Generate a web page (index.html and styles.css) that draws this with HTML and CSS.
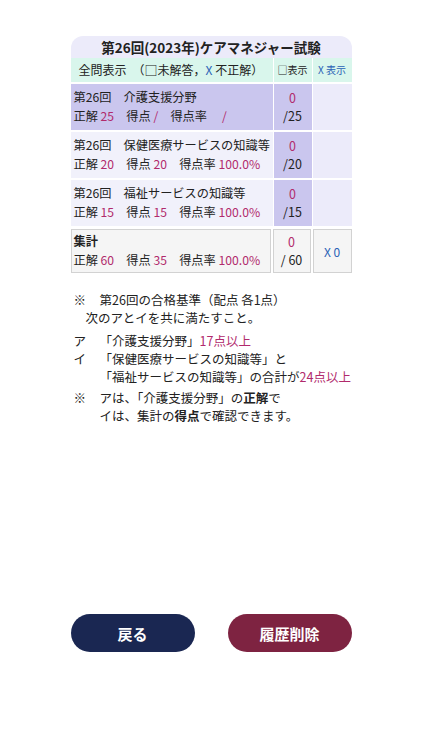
FILE: index.html
```html
<!DOCTYPE html>
<html lang="ja">
  <head>
    <meta charset="UTF-8" />
    <meta name="viewport" content="width=device-width, initial-scale=1.0" />
    <title>第26回(2023年)ケアマネジャー試験</title>
    <link rel="stylesheet" href="styles.css">
  </head>

  <body>
    <div class="page">
      <div class="board">
        <div class="title">第26回(2023年)ケアマネジャー試験</div>
        <div class="row head">
          <div class="cell">全問表示　（<span class="box">□</span>未解答，<span class="blue">X</span> 不正解）</div>
          <div class="cell mid small">□表示</div>
          <div class="cell mid small"><span class="blue">X 表示</span></div>
        </div>

        <div class="row item active">
          <div class="cell info">
            <div>第26回　介護支援分野</div>
            <div>正解 <span class="pink">25</span>　得点 <span class="pink">/</span>　得点率　 <span class="pink">/</span></div>
          </div>
          <div class="cell mid count"><span class="pink">0</span><span>/25</span></div>
          <div class="cell wrong"></div>
        </div>

        <div class="row item">
          <div class="cell info">
            <div>第26回　保健医療サービスの知識等</div>
            <div>正解 <span class="pink">20</span>　得点 <span class="pink">20</span>　得点率 <span class="pink">100.0%</span></div>
          </div>
          <div class="cell mid count"><span class="pink">0</span><span>/20</span></div>
          <div class="cell wrong"></div>
        </div>

        <div class="row item">
          <div class="cell info">
            <div>第26回　福祉サービスの知識等</div>
            <div>正解 <span class="pink">15</span>　得点 <span class="pink">15</span>　得点率 <span class="pink">100.0%</span></div>
          </div>
          <div class="cell mid count"><span class="pink">0</span><span>/15</span></div>
          <div class="cell wrong"></div>
        </div>

        <div class="row total">
          <div class="cell info">
            <div class="bold">集計</div>
            <div>正解 <span class="pink">60</span>　得点 <span class="pink">35</span>　得点率 <span class="pink">100.0%</span></div>
          </div>
          <div class="cell mid count"><span class="pink">0</span><span>/ 60</span></div>
          <div class="cell mid"><span class="blue">X 0</span></div>
        </div>
      </div>

      <div class="notes">
        <div class="note first">
          <span class="mark">※</span>
          <div>第26回の合格基準（配点 各1点）<br><span class="back">次のアとイを共に満たすこと。</span></div>
        </div>
        <div class="note">
          <span class="mark">ア</span>
          <div>「介護支援分野」<span class="pink">17点以上</span></div>
        </div>
        <div class="note third">
          <span class="mark">イ</span>
          <div>「保健医療サービスの知識等」と<br>「福祉サービスの知識等」の合計が<span class="pink">24点以上</span></div>
        </div>
        <div class="note">
          <span class="mark">※</span>
          <div>アは、「介護支援分野」の<b>正解</b>で<br>イは、集計の<b>得点</b>で確認できます。</div>
        </div>
      </div>

      <div class="buttons">
        <button class="btn back-btn">戻る</button>
        <button class="btn clear-btn">履歴削除</button>
      </div>
    </div>
  </body>
</html>
```

FILE: styles.css
```css
body {
  margin: 0;
  background-color: #ffffff;
  font-family: "Noto Sans CJK JP", "Noto Sans", sans-serif;
  color: #222222;
}

.page {
  width: 281px;
  margin: 0 auto;
  padding-top: 36px;
}

.title {
  height: 22px;
  line-height: 22px;
  background-color: #ecebfa;
  border-radius: 12px 12px 0 0;
  text-align: center;
  font-size: 13.5px;
  font-weight: bold;
}

.row {
  display: grid;
  grid-template-columns: 1fr 38px 39px;
  gap: 1px;
}

.cell {
  font-size: 12px;
  white-space: nowrap;
}

.mid {
  display: flex;
  flex-direction: column;
  justify-content: center;
  align-items: center;
}

.head {
  height: 24px;
  background-color: #ffffff;
}
.head .cell {
  background-color: #d9f6ec;
  line-height: 24px;
  font-size: 12px;
}
.head .cell:first-child {
  padding-left: 8px;
}
.head .small {
  font-size: 10px;
}
.box {
  font-size: 13px;
}

.item {
  margin-top: 2px;
  height: 46px;
}
.item .info {
  background-color: #f1f1fb;
}
.item .count {
  background-color: #cac6ee;
}
.item .wrong {
  background-color: #ecebfa;
}
.item.active .info {
  background-color: #cac6ee;
}

.info {
  display: flex;
  flex-direction: column;
  justify-content: center;
  padding-left: 3px;
  line-height: 19px;
  font-size: 12.2px;
}

.count {
  line-height: 18px;
  font-size: 12.5px;
}

.total {
  margin-top: 3px;
  height: 44px;
  gap: 2px;
}
.total .cell {
  background-color: #f5f5f5;
  border: 1px solid #d2d2d2;
}
.total .info {
  padding-left: 2px;
}

.bold {
  font-weight: bold;
}
.pink {
  color: #b12a6c;
}
.blue {
  color: #2a62b6;
}

.notes {
  margin-top: 18px;
  padding-left: 3px;
  font-size: 12.5px;
  line-height: 18px;
}
.note {
  display: flex;
}
.note.first {
  margin-bottom: 5px;
}
.note.third {
  margin-bottom: 3px;
}
.mark {
  width: 26px;
  flex-shrink: 0;
}
.back {
  margin-left: -14px;
}
.note b {
  font-weight: bold;
}

.buttons {
  display: flex;
  justify-content: space-between;
  margin-top: 189px;
}
.btn {
  width: 124px;
  height: 38px;
  border: none;
  border-radius: 19px;
  color: #ffffff;
  font-family: "Noto Sans CJK JP", sans-serif;
  font-size: 15px;
  font-weight: bold;
}
.back-btn {
  background-color: #1a2752;
}
.clear-btn {
  background-color: #7e2341;
}
```
